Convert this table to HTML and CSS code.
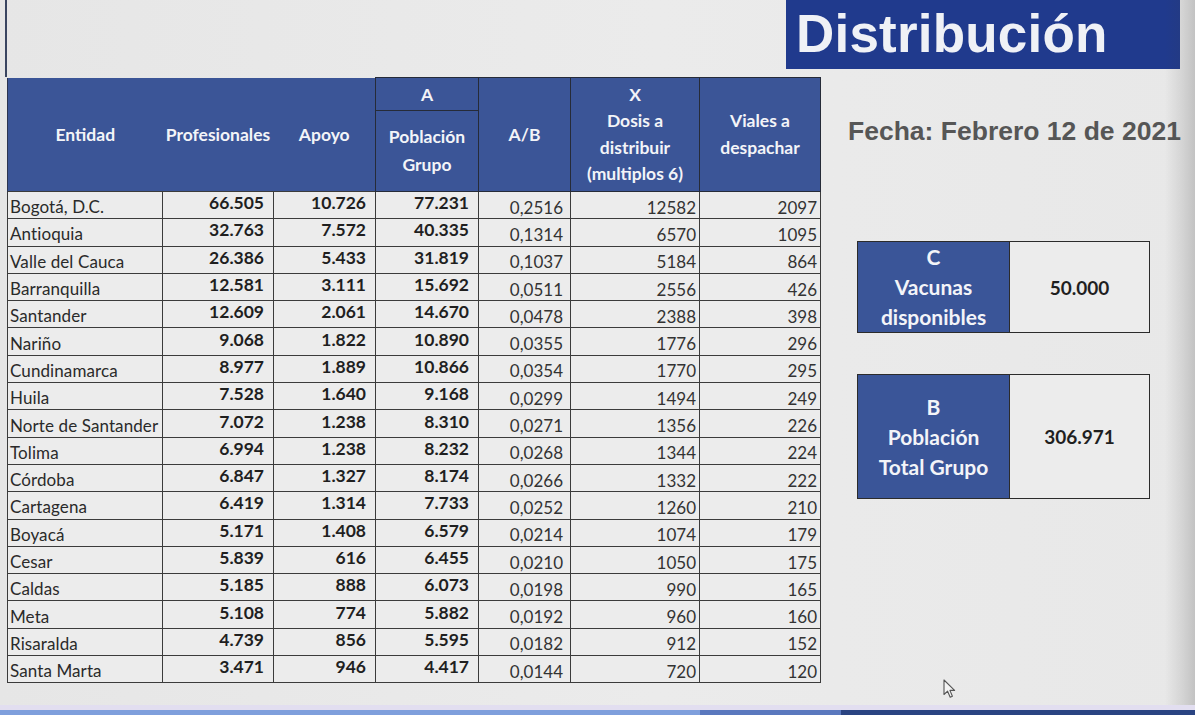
FILE: index.html
```html
<!DOCTYPE html>
<html lang="es">
<head>
<meta charset="utf-8">
<title>Distribución</title>
<link rel="stylesheet" href="styles.css">
</head>
<body>
<div class="page">
  <div class="top">
    <div class="title">Distribución</div>
  </div>
  <div class="main">
    <table class="grid">
      <colgroup>
        <col class="c1"><col class="c2"><col class="c3"><col class="c4"><col class="c5"><col class="c6"><col class="c7">
      </colgroup>
      <thead>
        <tr class="h1">
          <th rowspan="2" class="plain first">Entidad</th>
          <th rowspan="2" class="plain">Profesionales</th>
          <th rowspan="2" class="plain">Apoyo</th>
          <th class="boxed">A</th>
          <th rowspan="2" class="boxed">A/B</th>
          <th rowspan="2" class="boxed stack">X<br>Dosis a<br>distribuir<br>(multiplos 6)</th>
          <th rowspan="2" class="boxed stack">Viales a<br>despachar</th>
        </tr>
        <tr class="h2">
          <th class="boxed stack2">Población<br>Grupo</th>
        </tr>
      </thead>
      <tbody>
        <tr><td class="name">Bogotá, D.C.</td><td class="num">66.505</td><td class="num">10.726</td><td class="num">77.231</td><td class="ratio">0,2516</td><td class="cnt">12582</td><td class="cnt">2097</td></tr>
        <tr><td class="name">Antioquia</td><td class="num">32.763</td><td class="num">7.572</td><td class="num">40.335</td><td class="ratio">0,1314</td><td class="cnt">6570</td><td class="cnt">1095</td></tr>
        <tr><td class="name">Valle del Cauca</td><td class="num">26.386</td><td class="num">5.433</td><td class="num">31.819</td><td class="ratio">0,1037</td><td class="cnt">5184</td><td class="cnt">864</td></tr>
        <tr><td class="name">Barranquilla</td><td class="num">12.581</td><td class="num">3.111</td><td class="num">15.692</td><td class="ratio">0,0511</td><td class="cnt">2556</td><td class="cnt">426</td></tr>
        <tr><td class="name">Santander</td><td class="num">12.609</td><td class="num">2.061</td><td class="num">14.670</td><td class="ratio">0,0478</td><td class="cnt">2388</td><td class="cnt">398</td></tr>
        <tr><td class="name">Nariño</td><td class="num">9.068</td><td class="num">1.822</td><td class="num">10.890</td><td class="ratio">0,0355</td><td class="cnt">1776</td><td class="cnt">296</td></tr>
        <tr><td class="name">Cundinamarca</td><td class="num">8.977</td><td class="num">1.889</td><td class="num">10.866</td><td class="ratio">0,0354</td><td class="cnt">1770</td><td class="cnt">295</td></tr>
        <tr><td class="name">Huila</td><td class="num">7.528</td><td class="num">1.640</td><td class="num">9.168</td><td class="ratio">0,0299</td><td class="cnt">1494</td><td class="cnt">249</td></tr>
        <tr><td class="name">Norte de Santander</td><td class="num">7.072</td><td class="num">1.238</td><td class="num">8.310</td><td class="ratio">0,0271</td><td class="cnt">1356</td><td class="cnt">226</td></tr>
        <tr><td class="name">Tolima</td><td class="num">6.994</td><td class="num">1.238</td><td class="num">8.232</td><td class="ratio">0,0268</td><td class="cnt">1344</td><td class="cnt">224</td></tr>
        <tr><td class="name">Córdoba</td><td class="num">6.847</td><td class="num">1.327</td><td class="num">8.174</td><td class="ratio">0,0266</td><td class="cnt">1332</td><td class="cnt">222</td></tr>
        <tr><td class="name">Cartagena</td><td class="num">6.419</td><td class="num">1.314</td><td class="num">7.733</td><td class="ratio">0,0252</td><td class="cnt">1260</td><td class="cnt">210</td></tr>
        <tr><td class="name">Boyacá</td><td class="num">5.171</td><td class="num">1.408</td><td class="num">6.579</td><td class="ratio">0,0214</td><td class="cnt">1074</td><td class="cnt">179</td></tr>
        <tr><td class="name">Cesar</td><td class="num">5.839</td><td class="num">616</td><td class="num">6.455</td><td class="ratio">0,0210</td><td class="cnt">1050</td><td class="cnt">175</td></tr>
        <tr><td class="name">Caldas</td><td class="num">5.185</td><td class="num">888</td><td class="num">6.073</td><td class="ratio">0,0198</td><td class="cnt">990</td><td class="cnt">165</td></tr>
        <tr><td class="name">Meta</td><td class="num">5.108</td><td class="num">774</td><td class="num">5.882</td><td class="ratio">0,0192</td><td class="cnt">960</td><td class="cnt">160</td></tr>
        <tr><td class="name">Risaralda</td><td class="num">4.739</td><td class="num">856</td><td class="num">5.595</td><td class="ratio">0,0182</td><td class="cnt">912</td><td class="cnt">152</td></tr>
        <tr><td class="name">Santa Marta</td><td class="num">3.471</td><td class="num">946</td><td class="num">4.417</td><td class="ratio">0,0144</td><td class="cnt">720</td><td class="cnt">120</td></tr>
      </tbody>
    </table>
    <div class="side">
      <div class="fecha">Fecha: Febrero 12 de 2021</div>
      <div class="card card-c">
        <div class="card-label">C<br>Vacunas<br>disponibles</div>
        <div class="card-value">50.000</div>
      </div>
      <div class="card card-b">
        <div class="card-label">B<br>Población<br>Total Grupo</div>
        <div class="card-value">306.971</div>
      </div>
    </div>
  </div>
  <div class="taskbar">
    <div class="tb-a"></div><div class="tb-b"></div><div class="tb-c"></div>
  </div>
</div>
<div class="edge-shade"></div>
<svg class="cursor" width="14" height="20" viewBox="0 0 14 20" aria-hidden="true">
  <path d="M1 1 L1 15.5 L4.6 12.2 L7.2 18.2 L9.4 17.2 L6.9 11.4 L11.6 11.4 Z" fill="#f4f4f4" stroke="#555" stroke-width="1.1" stroke-linejoin="round"/>
</svg>
</body>
</html>
```

FILE: styles.css
```css
* { box-sizing: border-box; }

html, body {
  margin: 0;
  padding: 0;
}

body {
  width: 1195px;
  height: 715px;
  overflow: hidden;
  position: relative;
  background: linear-gradient(90deg, #e6e6e6 0%, #ebebeb 55%, #e8e8e8 100%);
  font-family: Lato, "Open Sans", "Liberation Sans", sans-serif;
  color: #222;
}

.page {
  height: 715px;
  display: flex;
  flex-direction: column;
}

.top {
  height: 77px;
  margin-left: 5px;
  border-left: 2px solid #3a4560;
  display: flex;
  justify-content: flex-end;
  align-items: flex-start;
  padding-right: 15px;
}

.title {
  width: 394px;
  height: 69px;
  background: #203a8d;
  color: #eff1f6;
  font-family: "Liberation Sans", Arial, sans-serif;
  font-weight: 700;
  font-size: 53px;
  line-height: 68px;
  padding-left: 10px;
  letter-spacing: 0.2px;
}

.main {
  display: flex;
  align-items: flex-start;
  padding-left: 7px;
}

/* ---------- table ---------- */
.grid {
  border-collapse: collapse;
  table-layout: fixed;
  width: 813px;
}

.c1 { width: 155px; }
.c2 { width: 111px; }
.c3 { width: 102px; }
.c4 { width: 103px; }
.c5 { width: 92px; }
.c6 { width: 129px; }
.c7 { width: 121px; }

.grid th {
  background: #3b5597;
  color: #f3f4f8;
  font-weight: 700;
  font-size: 17.5px;
  text-align: center;
  vertical-align: middle;
  padding: 0;
  white-space: nowrap;
}

.grid th.plain { border: none; }
.grid th.first { border-left: 1px solid #2c3550; }
.grid th.boxed { border: 1px solid #262b38; }
.grid th.stack { line-height: 26.5px; }
.grid th.stack2 { line-height: 28px; }

.h1 { height: 33px; }
.h2 { height: 81px; }

.grid td {
  height: 27.3px;
  border: 1px solid #3b3b3b;
  background: #ececec;
  font-size: 17px;
  padding: 0;
  white-space: nowrap;
  overflow: hidden;
}

.grid td.name {
  padding: 3px 0 0 2px;
  color: #2a2a2a;
  letter-spacing: 0.1px;
}

.grid td.num {
  text-align: right;
  font-weight: 700;
  font-size: 17.5px;
  padding: 0 9px 5px 0;
  color: #1f1f1f;
}

.grid td.ratio {
  text-align: right;
  padding: 4px 7px 0 0;
  color: #333;
}

.grid td.cnt {
  text-align: right;
  padding: 4px 3px 0 0;
  color: #333;
}

/* ---------- side panel ---------- */
.side {
  margin-left: 27px;
  display: flex;
  flex-direction: column;
}

.fecha {
  margin-top: 38px;
  font-family: "Liberation Sans", Arial, sans-serif;
  font-weight: 700;
  font-size: 26.5px;
  line-height: 32px;
  color: #565656;
  white-space: nowrap;
}

.card {
  margin-left: 9px;
  width: 293px;
  display: grid;
  grid-template-columns: 151px 1fr;
  border: 1.5px solid #2b2b2b;
}

.card-c { margin-top: 94px; height: 92px; }
.card-b { margin-top: 41px; height: 125px; }

.card-label {
  background: #3a5598;
  color: #f3f4f8;
  font-weight: 700;
  font-size: 21px;
  line-height: 30px;
  text-align: center;
  display: flex;
  align-items: center;
  justify-content: center;
}

.card-value {
  background: #ececec;
  border-left: 1px solid #2b2b2b;
  font-weight: 700;
  font-size: 19px;
  color: #1f1f1f;
  display: flex;
  align-items: center;
  justify-content: center;
}

/* ---------- bottom strip ---------- */
.taskbar {
  margin-top: auto;
  height: 10px;
  display: flex;
  border-top: 5px solid #e2def0;
}

.tb-a { width: 700px; background: #7f9fdc; }
.tb-b { width: 141px; background: #5a78be; }
.tb-c { flex: 1; background: #2a4482; }

/* ---------- overlays ---------- */
.edge-shade {
  position: absolute;
  top: 0;
  right: 0;
  width: 30px;
  height: 705px;
  background: linear-gradient(90deg, rgba(0,0,0,0) 0%, rgba(60,60,60,0.12) 60%, rgba(60,60,60,0.22) 100%);
  pointer-events: none;
}

.cursor {
  position: absolute;
  left: 943px;
  top: 679px;
}
```
